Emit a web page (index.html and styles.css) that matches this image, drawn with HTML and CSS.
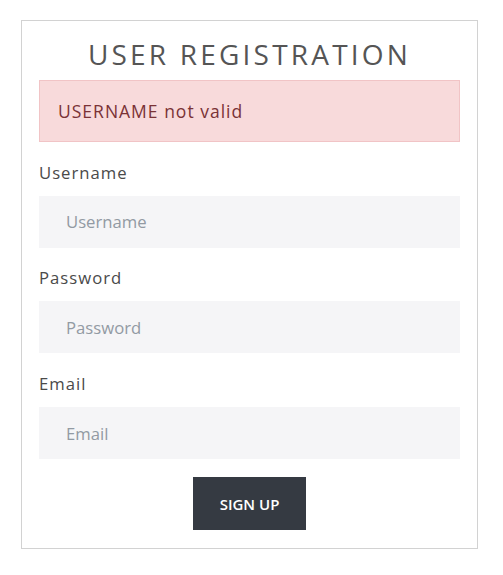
FILE: index.html
```html
<!DOCTYPE html>
<html lang="en">
<head>
<meta charset="utf-8">
<title>User Registration</title>
<link rel="stylesheet" href="styles.css">
</head>
<body>
<div class="card">
  <h1 class="title">USER REGISTRATION</h1>
  <div class="alert">USERNAME not valid</div>
  <form class="form">
    <label class="label" for="u">Username</label>
    <input class="input" id="u" type="text" placeholder="Username">
    <label class="label" for="p">Password</label>
    <input class="input" id="p" type="password" placeholder="Password">
    <label class="label" for="e">Email</label>
    <input class="input" id="e" type="email" placeholder="Email">
    <div class="actions"><button class="btn" type="button">SIGN UP</button></div>
  </form>
</div>
</body>
</html>
```
FILE: styles.css
```css
html, body { margin: 0; padding: 0; background: #fff; }
body { font-family: "Open Sans", "DejaVu Sans", sans-serif; }
.card {
  margin: 20px 0 0 21px;
  width: 421px;
  border: 1px solid #d2d2d2;
  padding: 15px 17px 18px;
}
.title {
  margin: 0 0 8px;
  font-size: 28px;
  line-height: 36px;
  font-weight: 400;
  letter-spacing: 3.2px;
  color: #555;
  text-align: center;
}
.alert {
  background: #f8dadb;
  border: 1px solid #f1c4c6;
  color: #7a3236;
  font-size: 17.5px;
  line-height: 24px;
  padding: 18px 18px;
  letter-spacing: 1px;
}
.form { display: flex; flex-direction: column; margin: 0; }
.label {
  display: block;
  margin: 18.7px 0 11px;
  font-size: 16.7px;
  line-height: 24px;
  letter-spacing: 1px;
  color: #4a4a4a;
}
.input {
  box-sizing: border-box;
  height: 52px;
  width: 100%;
  border: 0;
  background: #f5f5f7;
  padding: 0 27px;
  font-family: inherit;
  font-size: 16.7px;
  color: #333;
  outline: none;
}
.input::placeholder { color: #929aa3; }
.actions { display: flex; justify-content: center; margin-top: 18px; }
.btn {
  height: 53px;
  padding: 0 27px;
  border: 0;
  background: #353a42;
  color: #fff;
  font-family: inherit;
  font-weight: 600;
  font-size: 15px;
  cursor: pointer;
}
```
